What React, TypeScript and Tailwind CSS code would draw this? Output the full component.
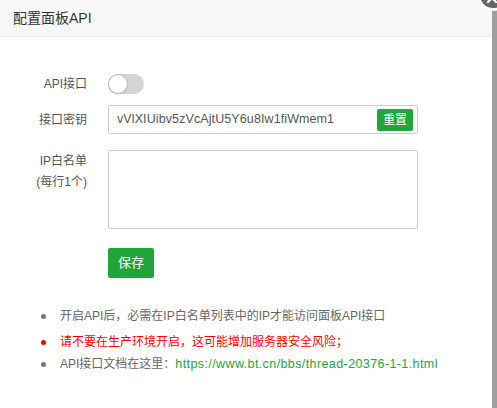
import { useState } from "react"

const font = "font-['Liberation_Sans','Noto_Sans_CJK_SC',sans-serif]"

export default function App() {
  const [enabled, setEnabled] = useState(false)

  return (
    <div className={`relative w-[497px] h-[408px] overflow-hidden bg-[#9f9f9f] ${font}`}>
      <div className="relative w-[492px] h-full bg-white flex flex-col">
        <div className="h-[37px] shrink-0 bg-[#f8f8f8] border-b border-[#eee] flex items-center pl-[13px] text-[14px] text-[#333]">
          配置面板API
        </div>

        <div className="flex flex-col">
          <div className="flex items-center mt-[37px] h-[20px]">
            <label className="w-[87px] text-right text-[12px] text-[#555]">API接口</label>
            <button
              onClick={() => setEnabled(!enabled)}
              className={`ml-[21px] w-[36px] h-[20px] rounded-full p-[1px] flex items-center ${enabled ? "bg-[#20a53a] justify-end" : "bg-[#d5d5d5] justify-start"}`}
            >
              <span className="block w-[18px] h-[18px] rounded-full bg-white shadow-[0_0_0_1px_#bdbdbd,0_1px_2px_rgba(0,0,0,0.25)]" />
            </button>
          </div>

          <div className="flex items-center mt-[11px] h-[29px]">
            <label className="w-[87px] text-right text-[12px] text-[#555]">接口密钥</label>
            <div className="ml-[21px] w-[310px] h-[29px] border border-[#ccc] rounded-[2px] flex items-center justify-between pl-[8px] pr-[4px]">
              <span className="text-[12.5px] text-[#555] tracking-[0.1px]">vVlXIUibv5zVcAjtU5Y6u8Iw1fiWmem1</span>
              <button className="h-[22px] w-[36px] rounded-[2px] bg-[#20a53a] text-white text-[12px]">重置</button>
            </div>
          </div>

          <div className="flex mt-[16px]">
            <label className="w-[87px] text-right text-[12px] text-[#555] leading-[21px] pt-[1px]">
              IP白名单
              <br />
              (每行1个)
            </label>
            <textarea className="ml-[21px] w-[310px] h-[79px] border border-[#ccc] rounded-[2px] resize-none outline-none" />
          </div>

          <div className="flex mt-[19px] pl-[108px]">
            <button className="w-[46px] h-[30px] rounded-[2px] bg-[#20a53a] text-white text-[13px]">保存</button>
          </div>

          <ul className="mt-[27px] pl-[41px] text-[12px] leading-[22px]">
            <li className="flex items-center text-[#666]">
              <span className="w-[5px] h-[5px] rounded-full bg-[#777] mr-[14px]" />
              开启API后，必需在IP白名单列表中的IP才能访问面板API接口
            </li>
            <li className="flex items-center mt-[4px] text-[#f00]">
              <span className="w-[5px] h-[5px] rounded-full bg-[#f00] mr-[14px]" />
              请不要在生产环境开启，这可能增加服务器安全风险；
            </li>
            <li className="flex items-center text-[#666]">
              <span className="w-[5px] h-[5px] rounded-full bg-[#777] mr-[14px]" />
              API接口文档在这里：
              <a className="text-[#20a53a] text-[12.5px] tracking-[0.4px]" href="#">
                https://www.bt.cn/bbs/thread-20376-1-1.html
              </a>
            </li>
          </ul>
        </div>
      </div>

      <div className="absolute left-[477px] top-[-21px] w-[32px] h-[32px] rounded-full bg-[#666] border-[3px] border-white flex items-center justify-center">
        <svg width="12" height="12" viewBox="0 0 12 12" className="mt-[6px] mr-[2px]">
          <path d="M2 2 L10 10 M10 2 L2 10" stroke="white" strokeWidth="2.2" strokeLinecap="round" />
        </svg>
      </div>
    </div>
  )
}
